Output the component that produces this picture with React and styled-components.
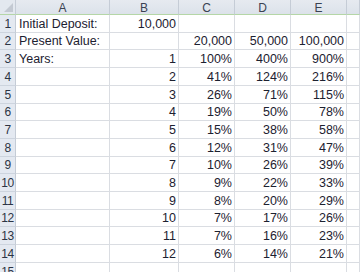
import React from "react";
import styled, { createGlobalStyle } from "styled-components";

const GlobalStyle = createGlobalStyle`
  html, body {
    margin: 0;
    padding: 0;
    background: #fff;
    overflow: hidden;
  }
`;

const COLUMNS = ["A", "B", "C", "D", "E", ""];

const ROWS = [
  ["Initial Deposit:", "10,000", "", "", ""],
  ["Present Value:", "", "20,000", "50,000", "100,000"],
  ["Years:", "1", "100%", "400%", "900%"],
  ["", "2", "41%", "124%", "216%"],
  ["", "3", "26%", "71%", "115%"],
  ["", "4", "19%", "50%", "78%"],
  ["", "5", "15%", "38%", "58%"],
  ["", "6", "12%", "31%", "47%"],
  ["", "7", "10%", "26%", "39%"],
  ["", "8", "9%", "22%", "33%"],
  ["", "9", "8%", "20%", "29%"],
  ["", "10", "7%", "17%", "26%"],
  ["", "11", "7%", "16%", "23%"],
  ["", "12", "6%", "14%", "21%"],
  ["", "", "", "", ""],
];

const Sheet = styled.div`
  display: grid;
  grid-template-columns: 16px 94px 69px 56px 56px 56px 1fr;
  grid-template-rows: 15px 18px 17px 18px 18px 18px 17px 18px 18px 17px 18px 18px 17px 18px 18px 18px;
  width: 360px;
  height: 272px;
  overflow: hidden;
  font-family: "Liberation Sans", Arial, sans-serif;
  font-size: 12.5px;
  color: #1c2130;
`;

const Corner = styled.div`
  box-sizing: border-box;
  background: #e3e8ef;
  border-right: 1px solid #c5ccd6;
  border-bottom: 1px solid #b5d6a7;
  display: flex;
  align-items: flex-end;
  justify-content: flex-end;
  padding: 0 2px 2px 0;
`;

const ColHeader = styled.div`
  box-sizing: border-box;
  background: linear-gradient(#e6eaf0, #dce2ea);
  border-right: 1px solid #c5ccd6;
  border-bottom: 1px solid #b5d6a7;
  display: flex;
  align-items: center;
  justify-content: center;
  color: #3a4252;
  font-size: 12px;
  padding-top: 1px;
`;

const RowHeader = styled.div`
  box-sizing: border-box;
  background: #e4e9f1;
  border-right: 1px solid #c5ccd6;
  border-bottom: 1px solid #cdd4de;
  display: flex;
  align-items: flex-end;
  justify-content: center;
  padding-bottom: 1px;
  color: #2c3444;
  font-size: 12px;
  letter-spacing: -0.5px;
`;

const Cell = styled.div`
  box-sizing: border-box;
  border-right: 1px solid #dadde2;
  border-bottom: 1px solid #dadde2;
  display: flex;
  align-items: flex-end;
  justify-content: ${(p) => (p.$right ? "flex-end" : "flex-start")};
  padding: 0 2px 1px 3px;
  white-space: nowrap;
  overflow: hidden;
`;

const App = () => {
  return (
    <>
      <GlobalStyle />
      <Sheet>
        <Corner>
          <svg width="9" height="9" viewBox="0 0 9 9">
            <polygon points="9,0 9,9 0,9" fill="#c3c9d2" />
          </svg>
        </Corner>
        {COLUMNS.map((c, i) => (
          <ColHeader key={i}>{c}</ColHeader>
        ))}
        {ROWS.map((row, r) => (
          <React.Fragment key={r}>
            <RowHeader>{r + 1}</RowHeader>
            {row.map((v, c) => (
              <Cell key={c} $right={c > 0}>
                {v}
              </Cell>
            ))}
            <Cell />
          </React.Fragment>
        ))}
      </Sheet>
    </>
  );
};

export default App;
